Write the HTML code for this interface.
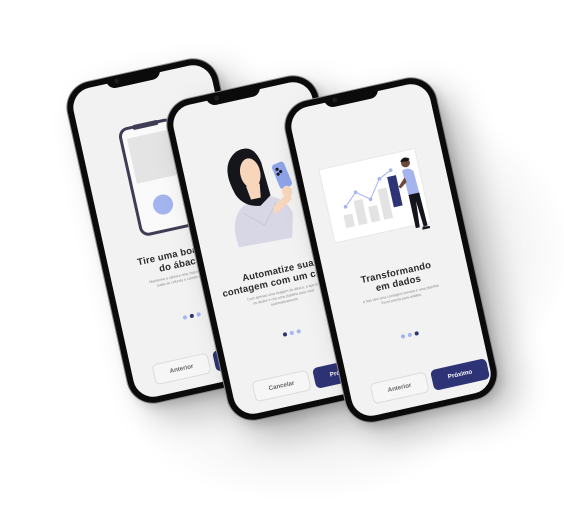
<!DOCTYPE html>
<html><head><meta charset="utf-8"><style>
html,body{margin:0;padding:0;width:564px;height:505px;overflow:hidden;background:#fff;font-family:"Liberation Sans",sans-serif}
.bg{position:absolute;inset:0;background:radial-gradient(ellipse 230px 200px at 400px 250px,rgba(0,0,0,.13),rgba(0,0,0,0) 75%),radial-gradient(ellipse 220px 110px at 300px 420px,rgba(0,0,0,.08),rgba(0,0,0,0) 75%)}
.ph{position:absolute;width:154px;height:328px;transform:rotate(-12.5deg);border-radius:26px;background:#0b0b0b;box-shadow:0 0 0 1px #8a8a8a,16px 18px 34px rgba(0,0,0,.25),4px 6px 10px rgba(0,0,0,.15)}
.scr{position:absolute;left:6px;top:6px;right:6px;bottom:6px;border-radius:20px;background:#f2f2f2;overflow:hidden}
.notch{position:absolute;left:44px;top:0;width:55px;height:12px;background:#0b0b0b;border-radius:0 0 9px 9px}
.notch i{position:absolute;left:8px;top:3px;width:5px;height:5px;border-radius:50%;background:#1c1c22}
.t{position:absolute;left:0;width:142px;text-align:center;font-weight:bold;font-size:9.5px;color:#2a2a2a;line-height:11px;white-space:nowrap;letter-spacing:.2px}
.b{position:absolute;left:0;width:142px;text-align:center;font-size:3.6px;color:#8a8a8a;line-height:5px;white-space:nowrap}
.dots{position:absolute;left:0;width:142px;text-align:center;top:243px;font-size:0}
.dots span{display:inline-block;width:4px;height:4px;border-radius:50%;margin:0 1.5px;background:#a4b4ee}
.dots span.d{background:#2e3375}
.btn{position:absolute;top:284px;height:21px;border-radius:5px;font-size:6.2px;font-weight:bold;text-align:center;line-height:21px}
.a{left:21px;width:55px;border:1px solid #dcdcdc;background:#f6f6f6;color:#666;height:19px;line-height:19px}
.p{left:83px;width:57px;background:#2e3375;color:#fff}
.il{position:absolute;left:0;top:0}
</style></head><body>
<div class="bg"></div>

<!-- Phone 1 -->
<div class="ph" style="left:96px;top:67px">
 <div class="scr">
  <svg class="il" width="142" height="316">
   <rect x="40" y="48" width="54" height="108" rx="8" fill="#fafafa" stroke="#3f3d56" stroke-width="3"/>
   <rect x="54" y="46" width="26" height="5" rx="2" fill="#3f3d56"/>
   <rect x="46" y="58" width="42" height="46" fill="#e4e4e4"/>
   <circle cx="67" cy="130" r="10" fill="#a4b4ee"/>
  </svg>
  <div class="t" style="top:176px">Tire uma boa foto<br>do ábaco</div>
  <div class="b" style="top:201px">Mantenha a câmera reta, boa iluminação e<br>todas as colunas e contas visíveis.</div>
  <div class="dots"><span></span><span class="d"></span><span></span></div>
  <div class="btn a">Anterior</div><div class="btn p">Próximo</div>
 </div>
 <div class="notch"><i></i></div>
</div>

<!-- Phone 2 -->
<div class="ph" style="left:196px;top:84px">
 <div class="scr">
  <svg class="il" width="142" height="316">
   <path d="M38 150 Q34 120 52 110 L78 106 Q94 112 98 128 L92 152 Z" fill="#d7d7e6"/>
   <path d="M50 118 L68 134 L84 114" stroke="#c8c8da" fill="none" stroke-width="1"/>
   <path d="M46 98 Q36 66 56 56 Q74 50 78 72 L80 106 L68 114 Q52 112 46 98 Z" fill="#15151c"/>
   <ellipse cx="65" cy="80" rx="10" ry="15" fill="#f7d6bc"/>
   <path d="M58 92 L72 92 L70 106 L60 106 Z" fill="#f7d6bc"/>
   <path d="M80 126 Q92 120 100 114 L98 106 Q90 112 80 118 Z" fill="#f7d6bc"/>
   <rect x="89" y="76" width="13" height="26" rx="3" fill="#8fa3e8" transform="rotate(-10 95 89)"/>
   <circle cx="92" cy="82" r="1.6" fill="#15151c"/><circle cx="95" cy="85" r="1.6" fill="#15151c"/><circle cx="92" cy="87" r="1.6" fill="#15151c"/>
   <ellipse cx="97" cy="106" rx="5" ry="6" fill="#f7d6bc"/>
  </svg>
  <div class="t" style="top:176px">Automatize sua<br>contagem com um clique</div>
  <div class="b" style="top:201px">Com apenas uma imagem do ábaco, o app lê<br>os dados e cria uma planilha para você<br>automaticamente.</div>
  <div class="dots"><span class="d"></span><span></span><span></span></div>
  <div class="btn a">Cancelar</div><div class="btn p">Próximo</div>
 </div>
 <div class="notch"><i></i></div>
</div>

<!-- Phone 3 -->
<div class="ph" style="left:314px;top:86px">
 <div class="scr">
  <svg class="il" width="142" height="316">
   <rect x="18" y="64" width="98" height="75" fill="#fff" stroke="#e8e8e8" stroke-width="1"/>
   <rect x="32" y="114" width="9" height="13" fill="#e3e3e3"/>
   <rect x="45" y="102" width="9" height="25" fill="#e3e3e3"/>
   <rect x="58" y="111" width="9" height="16" fill="#e3e3e3"/>
   <rect x="71" y="96" width="9" height="31" fill="#e3e3e3"/>
   <polyline points="36,106 49,94 62,104 75,86 88,80" fill="none" stroke="#a4b4ee" stroke-width="1"/>
   <circle cx="36" cy="106" r="1.8" fill="#a4b4ee"/><circle cx="49" cy="94" r="1.8" fill="#a4b4ee"/><circle cx="62" cy="104" r="1.8" fill="#a4b4ee"/><circle cx="75" cy="86" r="1.8" fill="#a4b4ee"/><circle cx="88" cy="80" r="1.8" fill="#a4b4ee"/>
   <rect x="83" y="86" width="9" height="31" fill="#2e3375"/>
   <circle cx="104" cy="76" r="4.5" fill="#6b4a3a"/><path d="M99 74 Q103 68 109 73 L106 75 Z" fill="#15151c"/>
   <path d="M99 83 Q106 80 110 86 L111 108 L100 108 Z" fill="#a4b4ee"/>
   <path d="M100 90 L92 98 L94 100 L101 95 Z" fill="#6b4a3a"/>
   <path d="M100 108 L111 108 L112 142 L108 142 L106 116 L104 142 L100 142 Z" fill="#15151c"/>
   <path d="M107 142 L114 143 L114 145 L106 145 Z" fill="#15151c"/>
  </svg>
  <div class="t" style="top:176px">Transformando<br>em dados</div>
  <div class="b" style="top:201px">A foto vira uma contagem precisa e uma planilha<br>Excel pronta para análise.</div>
  <div class="dots"><span></span><span></span><span class="d"></span></div>
  <div class="btn a">Anterior</div><div class="btn p">Próximo</div>
 </div>
 <div class="notch"><i></i></div>
</div>
</body></html>
